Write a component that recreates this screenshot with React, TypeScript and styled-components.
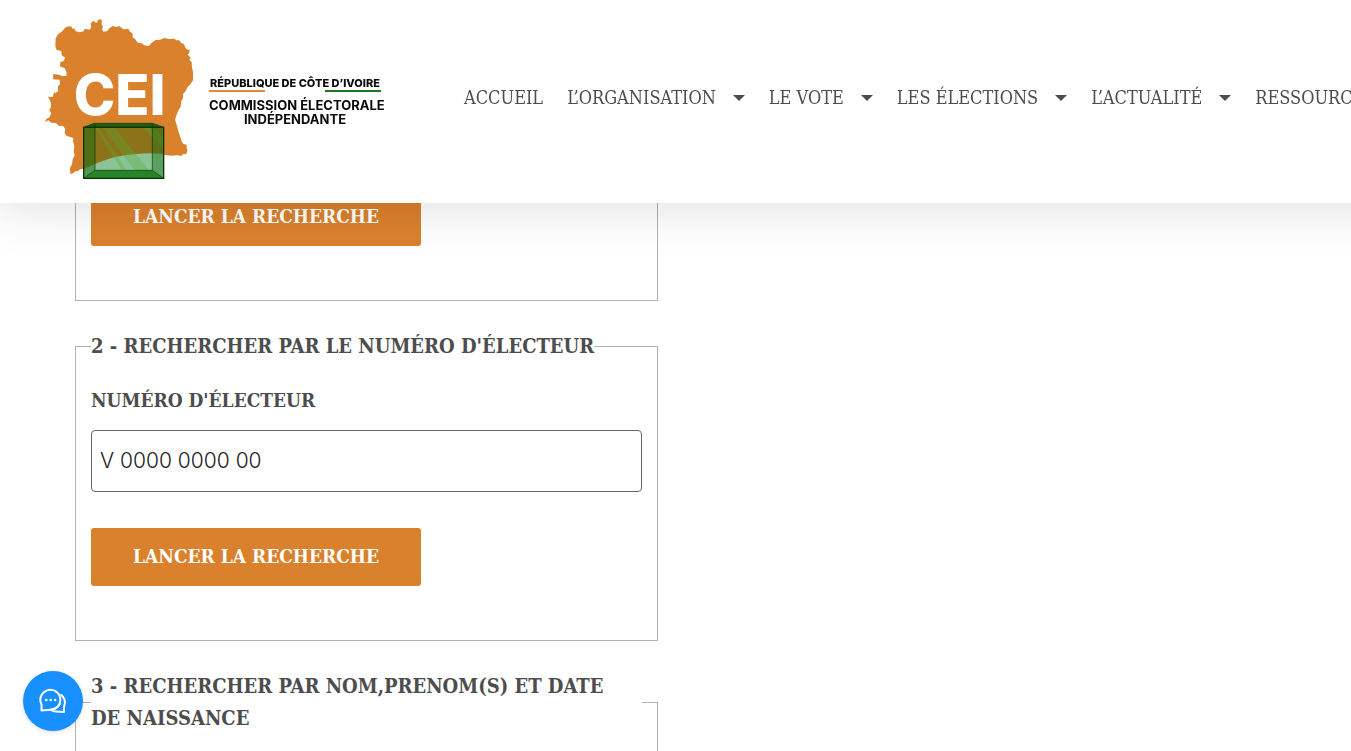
import React from "react";
import styled, { createGlobalStyle } from "styled-components";

const GlobalStyle = createGlobalStyle`
  *, *::before, *::after { box-sizing: border-box; }
  body {
    margin: 0;
    background: #fff;
    color: #4d4d4d;
    font-family: "DejaVu Serif Condensed", "Liberation Serif", serif;
  }
`;

const Page = styled.div`
  height: 100vh;
  overflow: hidden;
`;

const Header = styled.header`
  position: fixed;
  inset: 0 -60px auto 0;
  z-index: 2;
  display: flex;
  align-items: center;
  min-height: 203px;
  padding: 0 0 5px 44px;
  background: #fff;
  box-shadow: 0 0 50px 4px rgba(0, 0, 0, 0.13);
`;

const Brand = styled.a`
  display: flex;
  flex: none;
  align-items: center;
  gap: 15px;
  width: 420px;
  color: #0a0a0a;
  text-decoration: none;
`;

const BrandText = styled.span`
  display: flex;
  flex-direction: column;
  width: 172px;
  padding-top: 4px;
  font-family: Inter, "Liberation Sans", sans-serif;
  font-weight: 800;
  text-align: center;
  white-space: nowrap;
`;

const Country = styled.span`
  font-size: 11px;
  line-height: 14px;
`;

const Rules = styled.span`
  display: flex;
  justify-content: space-between;
  margin-bottom: 6px;
`;

const Rule = styled.span<{ $color: string }>`
  width: 56px;
  height: 2px;
  background: ${(p) => p.$color};
`;

const Institution = styled.span`
  font-size: 13px;
  font-weight: 700;
  line-height: 14px;
`;

const Nav = styled.nav`
  flex: 1;
  min-width: 0;
`;

const NavList = styled.ul`
  display: flex;
  gap: 24px;
  margin: 0;
  padding: 0 0 2px;
  list-style: none;
`;

const NavLink = styled.a`
  display: flex;
  align-items: center;
  gap: 17px;
  color: #4d4d4d;
  font-size: 18px;
  line-height: 32px;
  text-decoration: none;
  white-space: nowrap;
`;

const Main = styled.main`
  display: grid;
  grid-template-columns: 1fr 1fr;
  gap: 35px;
  padding: 187px 75px 0;
`;

const Forms = styled.div`
  display: flex;
  flex-direction: column;
  gap: 29px;
`;

const Group = styled.fieldset`
  min-width: 0;
  margin: 0;
  padding: 0 15px 54px;
  border: 1px solid #b3b3b3;
`;

const Legend = styled.legend<{ $full?: boolean }>`
  width: ${(p) => (p.$full ? "100%" : "auto")};
  padding: 0;
  font-size: 20px;
  font-weight: 700;
  line-height: 32px;
`;

const LegendLine = styled.span`
  display: block;
`;

const Label = styled.label`
  display: block;
  margin: 22px 0 14px;
  font-size: 19px;
  font-weight: 700;
  line-height: 32px;
`;

const Field = styled.input`
  display: block;
  width: 100%;
  height: 62px;
  margin-bottom: 36px;
  padding: 0 8px 2px;
  border: 1px solid #666;
  border-radius: 4px;
  background: #fff;
  color: #222;
  font-family: Inter, "Liberation Sans", sans-serif;
  font-size: 21px;
  font-weight: 300;
`;

const Submit = styled.button`
  display: block;
  width: 330px;
  max-width: 100%;
  height: 58px;
  padding: 0 0 2px;
  border: 0;
  border-radius: 3px;
  background: #da812d;
  color: #fff;
  font-family: inherit;
  font-size: 19px;
  font-weight: 700;
`;

const Chat = styled.button`
  position: fixed;
  bottom: 20px;
  left: 23px;
  z-index: 3;
  display: grid;
  place-items: center;
  width: 60px;
  height: 60px;
  padding: 0;
  border: 0;
  border-radius: 50%;
  background: #1890ff;
  box-shadow: 0 1px 4px rgba(0, 0, 0, 0.15);
`;

const menu = [
  { label: "ACCUEIL", sub: false },
  { label: "L’ORGANISATION", sub: true },
  { label: "LE VOTE", sub: true },
  { label: "LES ÉLECTIONS", sub: true },
  { label: "L’ACTUALITÉ", sub: true },
  { label: "RESSOURCES", sub: true },
];

const Caret = () => (
  <svg width="12" height="6" viewBox="0 0 12 6" aria-hidden="true">
    <path d="M0 0H12L6 6Z" fill="#4d4d4d" />
  </svg>
);

const Emblem = () => (
  <svg width="150" height="162" viewBox="42 39 450 486" role="img" aria-label="CEI">
    <path
      fill="#da812d"
      d="M77 100L84 88 95 80 102 72 110 65 124 64 127 72 133 70 137 79 150 82 161 79 164 71 179 74 184 67 182 56 189 47 195 52 201 53 204 44 213 43 216 49 214 58 219 65 216 74 221 80 232 78 238 70 248 63 260 66 265 63 273 67 280 73 295 71 299 79 308 86 308 97 316 103 323 113 334 115 343 121 356 124 365 113 377 105 390 104 403 99 417 102 434 101 438 106 448 106 453 113 462 118 466 128 473 135 479 133 478 143 473 149 482 158 478 164 485 172 486 187 489 202 489 226 480 239 472 247 467 258 459 267 459 279 454 289 452 305 444 318 439 332 435 344 440 359 446 382 449 391 455 409 460 417 470 419 470 430 473 434 469 447 458 448 454 453 442 451 423 452 401 449 300 449 220 466 175 484 162 491 150 493 143 499 135 499 130 505 121 507 120 489 126 478 128 463 134 451 131 438 133 424 129 409 130 399 119 395 110 393 104 384 106 373 99 362 87 363 78 354 64 353 55 346 44 352 49 342 58 337 64 325 58 315 63 305 62 291 54 275 68 276 73 260 76 265 84 258 84 244 90 238 89 224 69 223 70 207 87 209 97 214 110 212 109 200 104 190 90 184 91 171 101 168 106 158 95 151 94 138 80 135 76 123Z"
    />
    <text x="131" y="329" fill="#fff" fontFamily="Inter, sans-serif" fontSize="168" fontWeight="800">
      CEI
    </text>
    <path d="M160 367L192 355H368L402 367V521H160Z" fill="#8cc396" />
    <path d="M162 367H400V447Q340 440 255 456Q205 470 162 492Z" fill="#8c7218" />
    <path
      d="M195 369H207L290 496H276ZM220 369H255L357 496H313ZM340 369H372L400 395V430Z"
      fill="#4fae3c"
      fillOpacity="0.32"
    />
    <path d="M160 367H195V496L160 521Z" fill="#146c12" fillOpacity="0.5" />
    <path d="M402 367H367V496L402 521Z" fill="#146c12" fillOpacity="0.4" />
    <path d="M160 521L195 496H367L402 521Z" fill="#268529" />
    <path d="M160 367L192 355H368L402 367Z" fill="#245c0c" />
    <g fill="none" stroke="#0a3308">
      <path d="M161 367H401V520H161Z" strokeWidth="4" />
      <path d="M195 357V496H367V357M195 496L161 520M367 496L401 520M161 367L192 355H368L401 367" strokeWidth="2" />
    </g>
  </svg>
);

const ChatIcon = () => (
  <svg
    width="28"
    height="26"
    viewBox="0 0 28 26"
    fill="none"
    stroke="#fff"
    strokeWidth="2"
    strokeLinejoin="round"
    aria-hidden="true"
  >
    <path d="M2.500 22.500V16.500A10 10 0 1 1 11.500 21.800Z" />
    <path d="M21.500 6.300A9.500 9.500 0 0 1 25 18.500V24L17 23.500Q14 23.500 12 21.800Q19 20.500 21.300 15" />
    <g fill="#fff" stroke="none">
      <circle cx="7.300" cy="12" r="1.300" />
      <circle cx="11.700" cy="12" r="1.300" />
      <circle cx="16.100" cy="12" r="1.300" />
    </g>
  </svg>
);

export default function App() {
  return (
    <Page>
      <GlobalStyle />
      <Header>
        <Brand href="#">
          <Emblem />
          <BrandText>
            <Country>RÉPUBLIQUE DE CÔTE D’IVOIRE</Country>
            <Rules>
              <Rule $color="#dd8a40" />
              <Rule $color="#1c741f" />
            </Rules>
            <Institution>COMMISSION ÉLECTORALE</Institution>
            <Institution>INDÉPENDANTE</Institution>
          </BrandText>
        </Brand>
        <Nav>
          <NavList>
            {menu.map((item) => (
              <li key={item.label}>
                <NavLink href="#">
                  {item.label}
                  {item.sub && <Caret />}
                </NavLink>
              </li>
            ))}
          </NavList>
        </Nav>
      </Header>
      <Main>
        <Forms>
          <Group>
            <Submit type="button">LANCER LA RECHERCHE</Submit>
          </Group>
          <Group>
            <Legend>2 - RECHERCHER PAR LE NUMÉRO D'ÉLECTEUR</Legend>
            <Label htmlFor="numero">NUMÉRO D'ÉLECTEUR</Label>
            <Field id="numero" defaultValue="V 0000 0000 00" />
            <Submit type="button">LANCER LA RECHERCHE</Submit>
          </Group>
          <Group>
            <Legend $full>
              <LegendLine>3 - RECHERCHER PAR NOM,PRENOM(S) ET DATE</LegendLine>
              <LegendLine>DE NAISSANCE</LegendLine>
            </Legend>
          </Group>
        </Forms>
      </Main>
      <Chat type="button" aria-label="Chat">
        <ChatIcon />
      </Chat>
    </Page>
  );
}
